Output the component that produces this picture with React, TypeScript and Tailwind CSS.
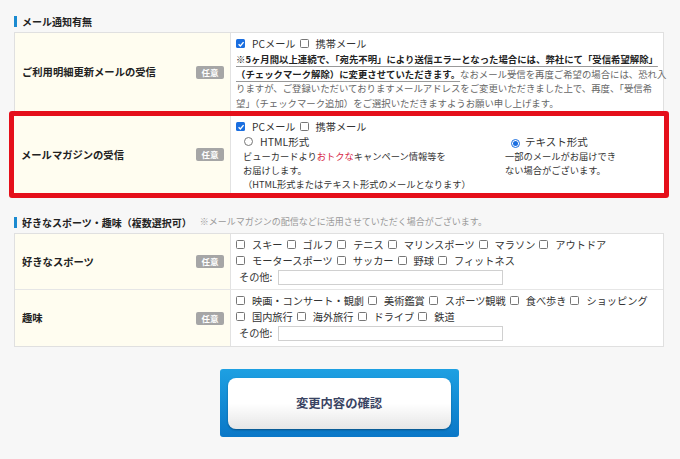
import React from "react"

const Box = ({ checked = false }: { checked?: boolean }) =>
  checked ? (
    <span className="inline-flex w-[9px] h-[9px] shrink-0 items-center justify-center rounded-[1.5px] bg-[#1a6ee0]">
      <svg viewBox="0 0 10 10" className="w-[8px] h-[8px]">
        <path d="M2 5.2 L4.2 7.4 L8.2 2.6" stroke="#fff" strokeWidth="1.7" fill="none" />
      </svg>
    </span>
  ) : (
    <span className="inline-block w-[9px] h-[9px] shrink-0 rounded-[1.5px] border border-[#767676] bg-white" />
  )

const Radio = ({ checked = false }: { checked?: boolean }) =>
  checked ? (
    <span className="inline-flex w-[9px] h-[9px] shrink-0 items-center justify-center rounded-full border border-[#1a6ee0] bg-white">
      <span className="w-[5px] h-[5px] rounded-full bg-[#1a6ee0]" />
    </span>
  ) : (
    <span className="inline-block w-[9px] h-[9px] shrink-0 rounded-full border border-[#767676] bg-white" />
  )

const Item = ({ label, checked = false }: { label: string; checked?: boolean }) => (
  <span className="inline-flex items-center mr-[4px]">
    <Box checked={checked} />
    <span className="ml-[7px]">{label}</span>
  </span>
)

const Badge = () => (
  <span className="flex w-[28px] h-[13px] items-center justify-center rounded-[2px] bg-[#a6a6a6] text-[8.5px] font-bold text-white">
    任意
  </span>
)

const Heading = ({ children, note }: { children: React.ReactNode; note?: string }) => (
  <div className="flex h-[14px] items-center mb-[4px]">
    <span className="w-[3px] h-[11px] bg-[#1b8ad0]" />
    <span className="ml-[5px] text-[10px] font-bold text-[#222]">{children}</span>
    {note && <span className="ml-[8px] text-[9px] text-[#999]">{note}</span>}
  </div>
)

const Label = ({ text, wide = false }: { text: string; wide?: boolean }) => (
  <div
    className={`${wide ? "w-[217px]" : "w-[216px]"} shrink-0 flex items-center justify-between bg-[#fffdf0] border-r border-[#e2e2e2] pl-[7px] pr-[6px]`}
  >
    <span className="text-[10.3px] font-bold text-[#222]">{text}</span>
    <Badge />
  </div>
)

const Other = () => (
  <div className="flex h-[16px] items-center ml-[3px]">
    <span>その他:</span>
    <span className="ml-[6px] w-[225px] h-[15px] border border-[#d0d0d0] bg-white" />
  </div>
)

export default function App() {
  return (
    <div className="min-h-screen bg-[#f7f7f7] text-[#333] font-['Noto_Sans_CJK_JP','Noto_Sans',sans-serif]">
      <div className="w-[650px] ml-[14px] pt-[14px]">
        {/* メール通知 */}
        <Heading>メール通知有無</Heading>
        <div className="border border-[#e0e0e0] bg-white">
          <div className="flex h-[78px]">
            <Label text="ご利用明細更新メールの受信" />
            <div className="flex-1 pl-[5px] pt-[3px] text-[10.2px]">
              <div className="flex h-[16px] items-center">
                <Item label="PCメール" checked />
                <Item label="携帯メール" />
              </div>
              <p className="text-[9.38px] leading-[14.5px] whitespace-nowrap text-[#666]">
                <span className="font-bold text-[#222] underline decoration-[#999] underline-offset-[3px]">
                  ※5ヶ月間以上連続で、「宛先不明」により送信エラーとなった場合には、弊社にて「受信希望解除」
                </span>
                <br />
                <span className="font-bold text-[#222] underline decoration-[#999] underline-offset-[3px]">
                  （チェックマーク解除）に変更させていただきます。
                </span>
                なおメール受信を再度ご希望の場合には、恐れ入
                <br />
                りますが、ご登録いただいておりますメールアドレスをご変更いただきました上で、再度、「受信希
                <br />
                望」（チェックマーク追加）をご選択いただきますようお願い申し上げます。
              </p>
            </div>
          </div>

          {/* highlighted row */}
          <div className="relative -mx-[6px] -mb-[1px] border-[5px] border-[#e50f1a] rounded-[3px] bg-white">
            <div className="flex h-[77px]">
              <Label text="メールマガジンの受信" wide />
              <div className="flex-1 pl-[5px] pt-[3px] text-[10.2px]">
                <div className="flex h-[16px] items-center">
                  <Item label="PCメール" checked />
                  <Item label="携帯メール" />
                </div>
                <div className="flex">
                  <div className="w-[262px] ml-[7px]">
                    <div className="flex h-[14px] items-center">
                      <span className="ml-[1px]"><Radio /></span>
                      <span className="ml-[7px] text-[10.5px]">HTML形式</span>
                    </div>
                    <p className="text-[9.25px] leading-[14px] whitespace-nowrap">
                      ビューカードより<span className="text-[#d6243f]">おトクな</span>キャンペーン情報等を
                      <br />
                      お届けします。
                      <br />
                      （HTML形式またはテキスト形式のメールとなります）
                    </p>
                  </div>
                  <div className="flex-1">
                    <div className="flex h-[14px] items-center">
                      <span className="ml-[6px]"><Radio checked /></span>
                      <span className="ml-[5px] text-[10.5px]">テキスト形式</span>
                    </div>
                    <p className="text-[9.25px] leading-[14px] whitespace-nowrap">
                      一部のメールがお届けでき
                      <br />
                      ない場合がございます。
                    </p>
                  </div>
                </div>
              </div>
            </div>
          </div>
        </div>

        {/* スポーツ・趣味 */}
        <div className="mt-[17px]">
          <Heading note="※メールマガジンの配信などに活用させていただく場合がございます。">
            好きなスポーツ・趣味（複数選択可）
          </Heading>
        </div>
        <div className="border border-[#e0e0e0] bg-white">
          <div className="flex h-[56px] border-b border-[#e6e6e6]">
            <Label text="好きなスポーツ" />
            <div className="flex-1 pl-[5px] pt-[3px] text-[10.2px]">
              <div className="flex h-[16px] items-center">
                {["スキー", "ゴルフ", "テニス", "マリンスポーツ", "マラソン", "アウトドア"].map((s) => (
                  <Item key={s} label={s} />
                ))}
              </div>
              <div className="flex h-[16px] items-center">
                {["モータースポーツ", "サッカー", "野球", "フィットネス"].map((s) => (
                  <Item key={s} label={s} />
                ))}
              </div>
              <Other />
            </div>
          </div>
          <div className="flex h-[56px]">
            <Label text="趣味" />
            <div className="flex-1 pl-[5px] pt-[3px] text-[10.2px]">
              <div className="flex h-[16px] items-center">
                {["映画・コンサート・観劇", "美術鑑賞", "スポーツ観戦", "食べ歩き", "ショッピング"].map((s) => (
                  <Item key={s} label={s} />
                ))}
              </div>
              <div className="flex h-[16px] items-center">
                {["国内旅行", "海外旅行", "ドライブ", "鉄道"].map((s) => (
                  <Item key={s} label={s} />
                ))}
              </div>
              <Other />
            </div>
          </div>
        </div>

        {/* button */}
        <div className="flex justify-center pt-[22px] pb-[23px]">
          <div className="w-[239px] h-[68px] rounded-[3px] bg-gradient-to-b from-[#1ea0e2] to-[#0a77c7] pt-[9px] pb-[8px] px-[8px]">
            <button className="w-full h-full rounded-[8px] bg-gradient-to-b from-white via-white to-[#e6e6e6] shadow-[0_1px_2px_rgba(0,0,0,0.35)] text-[12.3px] font-bold text-[#3a4463]">
              変更内容の確認
            </button>
          </div>
        </div>
      </div>
    </div>
  )
}
